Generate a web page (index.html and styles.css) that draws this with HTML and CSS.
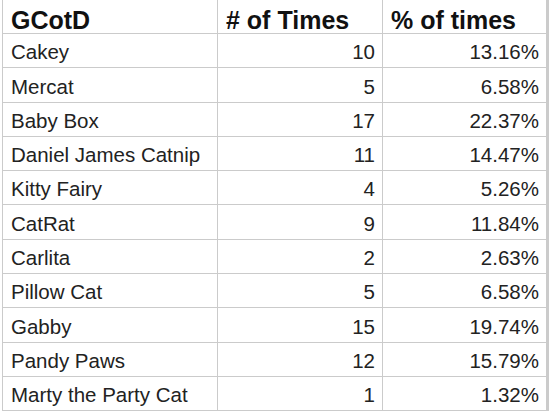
FILE: index.html
```html
<!DOCTYPE html>
<html>
<head>
<meta charset="utf-8">
<link rel="stylesheet" href="styles.css">
</head>
<body>
<div class="sheet">
  <div class="cell head">GCotD</div>
  <div class="cell head"># of Times</div>
  <div class="cell head">% of times</div>

  <div class="cell">Cakey</div><div class="cell num">10</div><div class="cell num">13.16%</div>
  <div class="cell">Mercat</div><div class="cell num">5</div><div class="cell num">6.58%</div>
  <div class="cell">Baby Box</div><div class="cell num">17</div><div class="cell num">22.37%</div>
  <div class="cell">Daniel James Catnip</div><div class="cell num">11</div><div class="cell num">14.47%</div>
  <div class="cell">Kitty Fairy</div><div class="cell num">4</div><div class="cell num">5.26%</div>
  <div class="cell">CatRat</div><div class="cell num">9</div><div class="cell num">11.84%</div>
  <div class="cell">Carlita</div><div class="cell num">2</div><div class="cell num">2.63%</div>
  <div class="cell">Pillow Cat</div><div class="cell num">5</div><div class="cell num">6.58%</div>
  <div class="cell">Gabby</div><div class="cell num">15</div><div class="cell num">19.74%</div>
  <div class="cell">Pandy Paws</div><div class="cell num">12</div><div class="cell num">15.79%</div>
  <div class="cell">Marty the Party Cat</div><div class="cell num">1</div><div class="cell num">1.32%</div>
</div>
</body>
</html>
```

FILE: styles.css
```css
html, body {
  margin: 0;
  padding: 0;
  background: #fff;
}
.sheet {
  margin-left: 2px;
  width: 545px;
  display: grid;
  grid-template-columns: 214px 164px 163px;
  grid-template-rows: 33px repeat(11, 33.3px);
  gap: 1px;
  background: #cbcbcb;
  border-left: 1px solid #cbcbcb;
  border-right: 1px solid #cbcbcb;
  border-bottom: 1px solid #cbcbcb;
  font-family: "Liberation Sans", Arial, sans-serif;
  color: #222;
}
.cell {
  background: #fff;
  font-size: 20.5px;
  line-height: 24px;
  padding: 0 7px 3px 8px;
  display: flex;
  align-items: flex-end;
  white-space: nowrap;
  overflow: hidden;
}
.num {
  justify-content: flex-end;
}
.head {
  font-weight: bold;
  font-size: 25px;
  color: #111;
  padding-bottom: 1px;
}
```
